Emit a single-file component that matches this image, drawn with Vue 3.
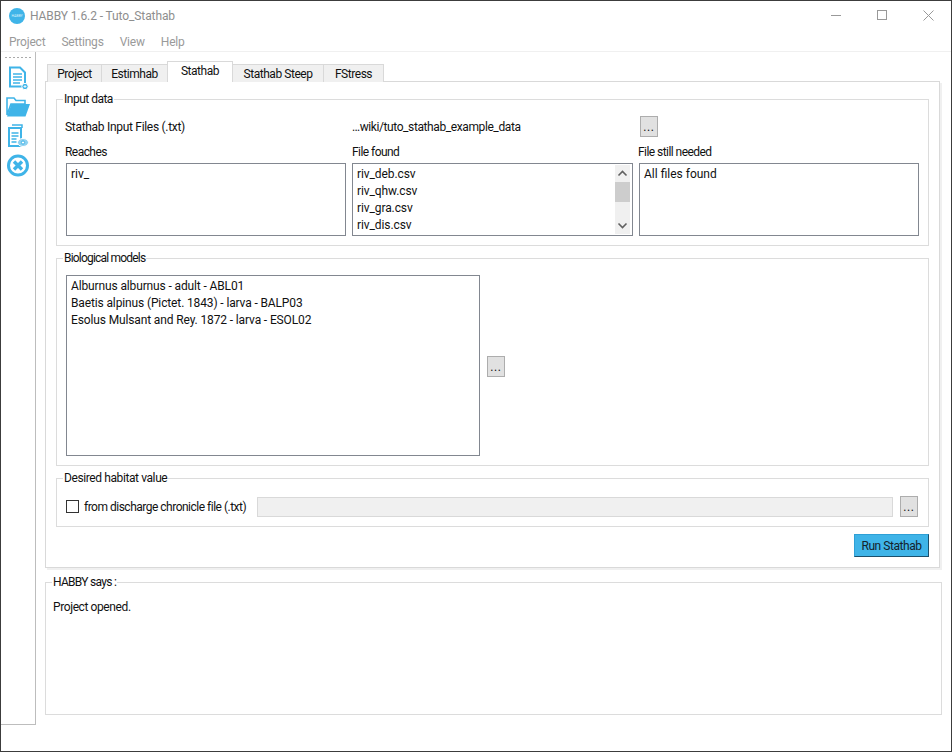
<script setup>
import { ref } from 'vue';

const menus = ['Project', 'Settings', 'View', 'Help'];
const tabs = ['Project', 'Estimhab', 'Stathab', 'Stathab Steep', 'FStress'];
const reaches = ref(['riv_']);
const filesFound = ref(['riv_deb.csv', 'riv_qhw.csv', 'riv_gra.csv', 'riv_dis.csv']);
const filesNeeded = ref(['All files found']);
const models = ref([
  'Alburnus alburnus - adult - ABL01',
  'Baetis alpinus (Pictet. 1843) - larva - BALP03',
  'Esolus Mulsant and Rey. 1872 - larva - ESOL02',
]);
</script>

<template>
  <div class="window">
    <header class="titlebar">
      <span class="logo">HABBY</span>
      <span class="title">HABBY 1.6.2 - Tuto_Stathab</span>
      <div class="controls">
        <svg width="11" height="11" viewBox="0 0 11 11"><path d="M0 5.500h10" stroke="#999" fill="none" /></svg>
        <svg width="11" height="11" viewBox="0 0 11 11"><rect x="0.500" y="0.500" width="9" height="9" stroke="#999" fill="none" /></svg>
        <svg width="11" height="11" viewBox="0 0 11 11"><path d="M0.500 0.500l10 10M10.500 0.500l-10 10" stroke="#999" fill="none" /></svg>
      </div>
    </header>
    <nav class="menubar">
      <span v-for="m in menus" :key="m">{{ m }}</span>
    </nav>

    <div class="main">
      <aside class="toolbar">
        <div class="grip"></div>
        <svg width="22" height="25" viewBox="0 0 22 25" fill="none">
          <path d="M3 1.500h10l5 5v14H3z" fill="#fff" stroke="#3fb4e8" stroke-width="2" />
          <path d="M6 8h9M6 11h9M6 14h9M6 17h7" stroke="#3fb4e8" stroke-width="1.500" />
          <circle cx="18" cy="20.500" r="3.200" fill="#3fb4e8" stroke="#fff" />
          <path d="M18 19v3M16.500 20.500h3" stroke="#fff" stroke-width="0.800" />
        </svg>
        <svg class="folder" width="24" height="21" viewBox="0 0 24 21">
          <path d="M1 19V2h7l2 2.500h9V8H5z" fill="#fff" stroke="#3fb4e8" stroke-width="1.600" />
          <path d="M5.500 8H24l-4.500 12.500H1z" fill="#3fb4e8" />
        </svg>
        <svg width="22" height="24" viewBox="0 0 22 24" fill="none">
          <path d="M5 1h10v3" stroke="#3fb4e8" stroke-width="1.500" />
          <path d="M2 4h12v18H2z" fill="#fff" stroke="#3fb4e8" stroke-width="2" />
          <path d="M4.500 9h7M4.500 12h7M4.500 15h5M4.500 18h5" stroke="#3fb4e8" stroke-width="1.400" />
          <ellipse cx="16" cy="18.500" rx="5.500" ry="4" fill="#8ed1f0" stroke="#fff" />
          <circle cx="16" cy="18.500" r="1.600" fill="#fff" stroke="#3fb4e8" />
        </svg>
        <svg class="close-icon" width="22" height="23" viewBox="0 0 22 23" fill="none">
          <circle cx="11" cy="11.500" r="9.500" stroke="#3fb4e8" stroke-width="3" />
          <path d="M7 7.500l8 8M15 7.500l-8 8" stroke="#3fb4e8" stroke-width="3.400" />
        </svg>
      </aside>

      <div class="content">
        <div class="tabs">
          <button v-for="t in tabs" :key="t" class="tab" :class="{ active: t === 'Stathab' }">{{ t }}</button>
        </div>

        <section class="pane">
          <fieldset class="group input-group">
            <legend>Input data</legend>
            <div class="path-row">
              <span class="path-label">Stathab Input Files (.txt)</span>
              <span class="path-value">…wiki/tuto_stathab_example_data</span>
              <button class="dots">...</button>
            </div>
            <div class="lists">
              <div class="col">
                <label class="first-label">Reaches</label>
                <ul class="list short">
                  <li v-for="r in reaches" :key="r">{{ r }}</li>
                </ul>
              </div>
              <div class="col">
                <label>File found</label>
                <div class="list short scrolled">
                  <ul>
                    <li v-for="f in filesFound" :key="f">{{ f }}</li>
                  </ul>
                  <div class="scrollbar">
                    <svg width="15" height="17" viewBox="0 0 15 17"><path d="M3.500 10.500l4-4 4 4" stroke="#606060" stroke-width="1.600" fill="none" /></svg>
                    <div class="thumb"></div>
                    <svg class="down" width="15" height="17" viewBox="0 0 15 17"><path d="M3.500 6.500l4 4 4-4" stroke="#606060" stroke-width="1.600" fill="none" /></svg>
                  </div>
                </div>
              </div>
              <div class="col">
                <label class="first-label">File still needed</label>
                <ul class="list short">
                  <li v-for="f in filesNeeded" :key="f">{{ f }}</li>
                </ul>
              </div>
            </div>
          </fieldset>

          <fieldset class="group bio-group">
            <legend>Biological models</legend>
            <ul class="list bio">
              <li v-for="m in models" :key="m">{{ m }}</li>
            </ul>
            <button class="dots">...</button>
          </fieldset>

          <fieldset class="group desired-group">
            <legend>Desired habitat value</legend>
            <span class="check"></span>
            <span class="check-label">from discharge chronicle file (.txt)</span>
            <div class="disabled-input"></div>
            <button class="dots">...</button>
          </fieldset>

          <div class="run-row">
            <button class="run">Run Stathab</button>
          </div>
        </section>

        <fieldset class="group says">
          <legend>HABBY says :</legend>
          <p>Project opened.</p>
        </fieldset>
      </div>
    </div>
  </div>
</template>

<style>
html, body {
  margin: 0;
  background: #fff;
}
</style>

<style scoped>
.window {
  width: 952px;
  height: 752px;
  box-sizing: border-box;
  border: 1px solid #3c3c3c;
  background: #fff;
  display: flex;
  flex-direction: column;
  overflow: hidden;
  font-family: Roboto, "Noto Sans", sans-serif;
  font-size: 12px;
  color: #111;
}
.titlebar {
  height: 29px;
  display: flex;
  align-items: center;
  padding: 0 7px 0 8px;
  flex: none;
}
.logo {
  width: 16px;
  height: 16px;
  border-radius: 50%;
  background: #3fb4e8;
  color: #d8f0fb;
  font-size: 3.500px;
  line-height: 16px;
  text-align: center;
  overflow: hidden;
}
.title {
  margin-left: 5px;
  color: #8e8e8e;
  letter-spacing: -0.1px;
}
.controls {
  margin-left: auto;
  display: flex;
  gap: 35px;
  padding-right: 10px;
}
.menubar {
  height: 22px;
  box-sizing: border-box;
  padding: 2px 0 0 8px;
  flex: none;
  display: flex;
  align-items: center;
  gap: 16px;
  color: #9a9a9a;
  letter-spacing: -0.2px;
  border-bottom: 1px solid #f0f0f0;
}
.main {
  flex: 1;
  display: flex;
  min-height: 0;
}
.toolbar {
  width: 35px;
  height: 673px;
  flex: none;
  box-sizing: border-box;
  border-right: 1px solid #bdbdbd;
  border-bottom: 1px solid #bdbdbd;
  display: flex;
  flex-direction: column;
  align-items: center;
  padding: 5px 1px 0 0;
  gap: 7px;
}
.grip {
  width: 26px;
  height: 1px;
  background: repeating-linear-gradient(to right, #aaa 0 2px, transparent 2px 4px);
  margin-bottom: 1px;
}
.folder {
  margin-top: -2px;
}
.close-icon {
  margin-top: -1px;
}
.content {
  flex: 1;
  padding: 9px 9px 0 9px;
  min-width: 0;
}
.tabs {
  display: grid;
  grid-template-columns: 55px 66px 65px 91px 60px;
  align-items: end;
  height: 21px;
  padding-left: 2px;
  margin-bottom: -1px;
  position: relative;
}
.tab {
  height: 18px;
  padding: 0;
  border: 1px solid #d9d9d9;
  border-bottom: none;
  margin-left: -1px;
  background: #f0f0f0;
  font: inherit;
  letter-spacing: -0.45px;
  color: #111;
}
.tab:first-child {
  margin-left: 0;
}
.tab.active {
  height: 21px;
  background: #fff;
  padding: 0 0 3px;
}
.pane {
  height: 487px;
  margin-right: 2px;
  box-sizing: border-box;
  border: 1px solid #d9d9d9;
  box-shadow: 2px 2px 0 #f0f0f0;
  padding: 9px 10px 0 10px;
}
.group {
  margin: 0;
  min-width: 0;
  border: 1px solid #dcdcdc;
  box-sizing: border-box;
  padding: 0;
}
.group legend {
  padding: 0 1px;
  line-height: 16px;
  letter-spacing: -0.5px;
}
.input-group {
  height: 155px;
  padding: 9px 9px 0 9px;
}
.input-group legend {
  margin-left: -3px;
}
.path-row {
  display: flex;
  align-items: center;
  height: 21px;
  margin-left: -1px;
}
.path-label {
  width: 287px;
  letter-spacing: -0.3px;
}
.path-value {
  width: 288px;
  letter-spacing: -0.4px;
}
.lists {
  display: grid;
  grid-template-columns: 280px 281px 280px;
  gap: 6px;
  margin-top: 4px;
}
.col label {
  display: block;
  height: 22px;
  line-height: 22px;
  letter-spacing: -0.55px;
}
.col .first-label {
  margin-left: -1px;
}
.list {
  margin: 0;
  padding: 2px 4px;
  list-style: none;
  border: 1px solid #828790;
  box-sizing: border-box;
  background: #fff;
}
.list li {
  height: 17px;
  line-height: 17px;
}
.short {
  height: 73px;
}
.scrolled {
  display: flex;
  padding: 1px 2px 1px 4px;
  letter-spacing: -0.1px;
}
.scrolled ul {
  flex: 1;
  margin: 0;
  padding: 1px 0 0;
  list-style: none;
}
.scrollbar {
  width: 15px;
  background: #f0f0f0;
  display: flex;
  flex-direction: column;
}
.thumb {
  height: 20px;
  background: #cdcdcd;
}
.down {
  margin-top: auto;
}
.dots {
  width: 18px;
  height: 21px;
  padding: 0;
  border: 1px solid #adadad;
  background: #e1e1e1;
  font: inherit;
  letter-spacing: 0.6px;
  color: #111;
  flex: none;
}
.bio-group {
  height: 216px;
  margin-top: 4px;
  padding: 9px 0 0 9px;
  display: flex;
  align-items: flex-start;
}
.bio-group legend {
  margin-left: -3px;
  letter-spacing: -0.8px;
}
.bio {
  width: 414px;
  height: 181px;
  letter-spacing: -0.13px;
}
.bio-group .dots {
  margin-left: 7px;
  margin-top: 81px;
}
.desired-group {
  height: 57px;
  margin-top: 4px;
  padding: 1px 0 0 9px;
  display: flex;
  align-items: center;
}
.desired-group legend {
  margin-left: -3px;
  letter-spacing: -0.4px;
}
.check {
  width: 13px;
  height: 13px;
  border: 1px solid #333;
  box-sizing: border-box;
  flex: none;
}
.check-label {
  margin-left: 5px;
  width: 173px;
  white-space: nowrap;
  letter-spacing: -0.5px;
}
.disabled-input {
  width: 636px;
  height: 20px;
  box-sizing: border-box;
  border: 1px solid #d9d9d9;
  background: #f0f0f0;
}
.desired-group .dots {
  margin-left: 7px;
}
.run-row {
  display: flex;
  justify-content: flex-end;
  margin-top: 7px;
}
.run {
  width: 75px;
  height: 23px;
  border: 1px solid #2fa0d6;
  border-right-color: #1c4f6b;
  border-bottom-color: #1c4f6b;
  background: #3fb4e8;
  font: inherit;
  letter-spacing: -0.45px;
  color: #14222b;
  padding: 0;
}
.says {
  height: 141px;
  margin-top: 6px;
  padding: 0 0 0 7px;
}
.says legend {
  margin-left: -1px;
  letter-spacing: -0.7px;
}
.says p {
  margin: 9px 0 0;
  line-height: 17px;
  letter-spacing: -0.4px;
}
</style>
